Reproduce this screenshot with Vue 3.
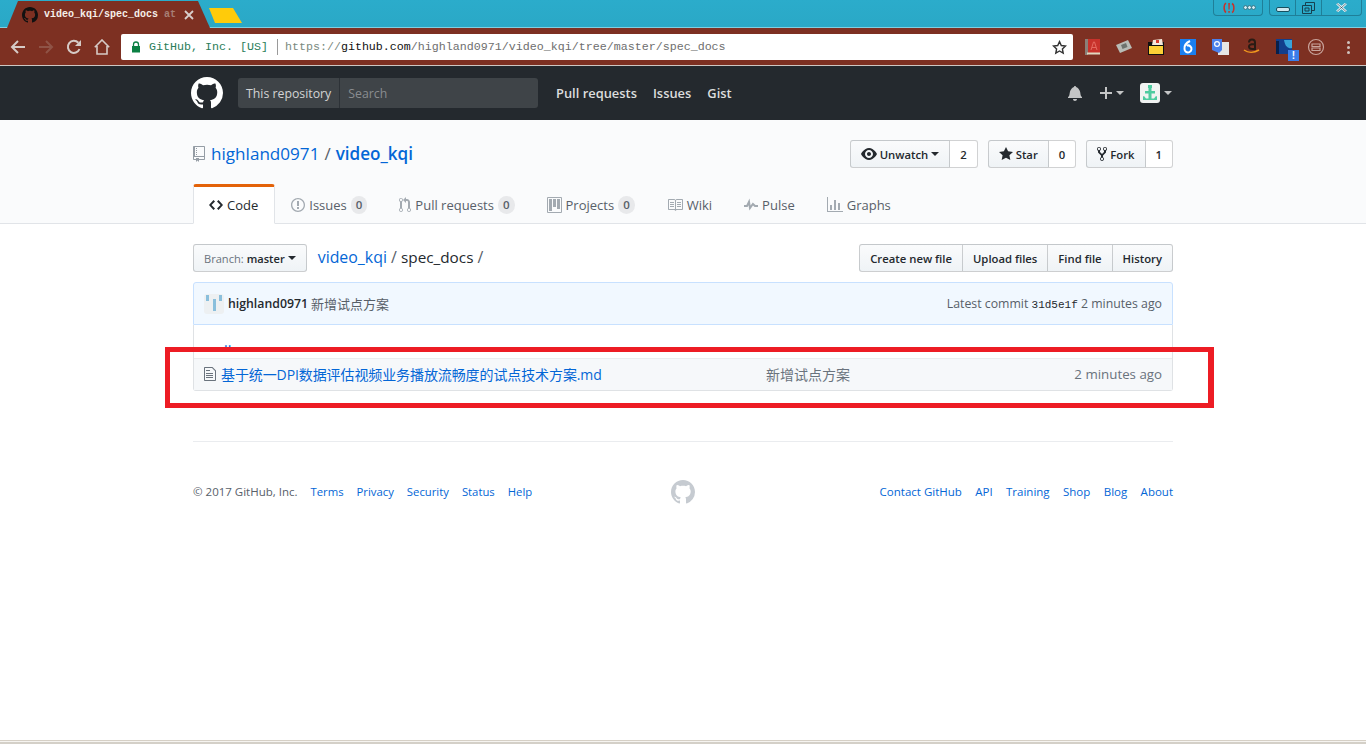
<script setup>
const gh = 'M8 0C3.58 0 0 3.58 0 8c0 3.54 2.29 6.53 5.47 7.59.4.07.55-.17.55-.38 0-.19-.01-.82-.01-1.49-2.01.37-2.53-.49-2.69-.94-.09-.23-.48-.94-.82-1.13-.28-.15-.68-.52-.01-.53.63-.01 1.08.58 1.23.82.72 1.21 1.87.87 2.33.66.07-.52.28-.87.51-1.07-1.78-.2-3.64-.89-3.64-3.95 0-.87.31-1.59.82-2.15-.08-.2-.36-1.02.08-2.12 0 0 .67-.21 2.2.82.64-.18 1.32-.27 2-.27.68 0 1.36.09 2 .27 1.53-1.04 2.2-.82 2.2-.82.44 1.1.16 1.92.08 2.12.51.56.82 1.27.82 2.15 0 3.07-1.87 3.75-3.65 3.95.29.25.54.73.54 1.48 0 1.07-.01 1.93-.01 2.2 0 .21.15.46.55.38A8.013 8.013 0 0 0 16 8c0-4.42-3.58-8-8-8z'

const tabs = [
  { label: 'Code', w: 14, vb: '0 0 14 16', d: 'M9.5 3L8 4.5 11.5 8 8 11.5 9.5 13 14 8 9.5 3zm-5 0L0 8l4.5 5L6 11.5 2.5 8 6 4.5 4.5 3z', active: true },
  { label: 'Issues', count: 0, w: 14, vb: '0 0 14 16', d: 'M7 2.3c3.14 0 5.7 2.56 5.7 5.7s-2.56 5.7-5.7 5.7A5.71 5.71 0 0 1 1.3 8c0-3.14 2.56-5.7 5.7-5.7zM7 1C3.14 1 0 4.14 0 8s3.14 7 7 7 7-3.14 7-7-3.14-7-7-7zm1 3H6v5h2V4zm0 6H6v2h2v-2z' },
  { label: 'Pull requests', count: 0, w: 12, vb: '0 0 12 16', d: 'M11 11.28V5c-.03-.78-.34-1.47-.94-2.06C9.46 2.35 8.78 2.03 8 2H7V0L4 3l3 3V4h1c.27.02.48.11.69.31.21.2.3.42.31.69v6.28A1.993 1.993 0 0 0 10 15a1.993 1.993 0 0 0 1-3.72zm-1 2.92c-.66 0-1.2-.55-1.2-1.2 0-.65.55-1.2 1.2-1.2.65 0 1.2.55 1.2 1.2 0 .65-.55 1.2-1.2 1.2zM4 3c0-1.11-.89-2-2-2a1.993 1.993 0 0 0-1 3.72v6.56A1.993 1.993 0 0 0 2 15a1.993 1.993 0 0 0 1-3.72V4.72c.59-.34 1-.98 1-1.72zm-.8 10c0 .66-.55 1.2-1.2 1.2-.65 0-1.2-.55-1.2-1.2 0-.65.55-1.2 1.2-1.2.65 0 1.2.55 1.2 1.2zM2 4.2C1.34 4.2.8 3.65.8 3c0-.65.55-1.2 1.2-1.2.65 0 1.2.55 1.2 1.2 0 .65-.55 1.2-1.2 1.2z' },
  { label: 'Projects', count: 0, w: 15, vb: '0 0 15 16', d: 'M10 12h3V2h-3v10zm-4-2h3V2H6v8zm-4 4h3V2H2v12zm-1 1h13V1H1v14zM14 0H1a1 1 0 0 0-1 1v14a1 1 0 0 0 1 1h13a1 1 0 0 0 1-1V1a1 1 0 0 0-1-1z' },
  { label: 'Wiki', w: 16, vb: '0 0 16 16', d: 'M3 5h4v1H3V5zm0 3h4V7H3v1zm0 2h4V9H3v1zm11-5h-4v1h4V5zm0 2h-4v1h4V7zm0 2h-4v1h4V9zm2-6v9c0 .55-.45 1-1 1H9.5l-1 1-1-1H2c-.55 0-1-.45-1-1V3c0-.55.45-1 1-1h5.5l1 1 1-1H15c.55 0 1 .45 1 1zm-8 .5L7.5 3H2v9h6V3.5zm7-.5H9.5l-.5.5V12h6V3z' },
  { label: 'Pulse', w: 14, vb: '0 0 14 16', d: 'M11.5 8L8.8 5.4 6.6 8.5 5.5 1.6 2.38 8H0v2h3.6l.9-1.8.9 5.4L9 8.5l1.6 1.5H14V8z' },
  { label: 'Graphs', w: 16, vb: '0 0 16 16', d: 'M16 14v1H0V0h1v14h15zM5 13H3V8h2v5zm4 0H7V3h2v10zm4 0h-2V6h2v7z' }
]

const footLeft = ['Terms', 'Privacy', 'Security', 'Status', 'Help']
const footRight = ['Contact GitHub', 'API', 'Training', 'Shop', 'Blog', 'About']
const fileActions = ['Create new file', 'Upload files', 'Find file', 'History']
</script>

<template>
  <div class="page">
    <!-- browser chrome -->
    <div class="tabstrip">
      <div class="tab">
        <svg class="tab-icon" width="16" height="16" viewBox="0 0 16 16"><path :d="gh" fill="#111" /></svg>
        <span class="tab-title">video_kqi/spec_docs <i>at</i></span>
        <svg class="tab-x" width="10" height="10" viewBox="0 0 10 10"><path d="M1 1l8 8M9 1l-8 8" stroke="#d8cfcc" stroke-width="1.8" /></svg>
      </div>
      <div class="tab-new"></div>
      <div class="winbtns">
        <div class="winbox alert">
          <svg width="14" height="12" viewBox="0 0 14 12"><path d="M4 1.200C1.500 2.500 1.500 9 4 10.500M10 1.500c2.500 1.200 2.500 7.800 0 9" fill="none" stroke="#c8322b" stroke-width="1.500" /><path d="M6.300 1h1.600l-.3 6.500H6.500zM6.300 9h1.500v1.700H6.300z" fill="#c8322b" /></svg>
          <span class="dots"><i></i><i></i><i></i></span>
        </div>
        <div class="winbox ctl">
          <div class="ctl-cell"><span class="min"></span></div>
          <div class="ctl-cell">
            <svg width="13" height="12" viewBox="0 0 13 12"><path d="M3.500 3V.5h9v8H10M.5 3.500h9v8h-9zM3 6h4v3H3z" fill="none" stroke="#16404f" /></svg>
          </div>
          <div class="ctl-cell wide">
            <svg width="11" height="9" viewBox="0 0 11 9"><path d="M1 .5l9 8M10 .5l-9 8" stroke="#e8f4f8" stroke-width="2.400" /><path d="M1 .5l9 8M10 .5l-9 8" stroke="#16404f" stroke-width=".6" /></svg>
          </div>
        </div>
      </div>
    </div>

    <div class="toolbar">
      <svg class="nav-ic" width="16" height="16" viewBox="0 0 16 16"><path d="M15 8H2M8 2L2 8l6 6" fill="none" stroke="#d6cac6" stroke-width="2" /></svg>
      <svg class="nav-ic" width="16" height="16" viewBox="0 0 16 16"><path d="M1 8h13M8 2l6 6-6 6" fill="none" stroke="#8f5346" stroke-width="2" /></svg>
      <svg class="nav-ic" width="16" height="16" viewBox="0 0 16 16"><path d="M13.500 10A6 6 0 1 1 12.300 3.800" fill="none" stroke="#d6cac6" stroke-width="2" /><path d="M15 1v6H9z" fill="#d6cac6" /></svg>
      <svg class="nav-ic" width="16" height="16" viewBox="0 0 16 16"><path d="M.8 8.200L8 1l7.200 7.200M3 7v8h10V7" fill="none" stroke="#d6cac6" stroke-width="1.600" /></svg>
      <div class="omni">
        <svg width="10" height="12" viewBox="0 0 10 12"><path d="M2.500 5V3.500a2.500 2.500 0 0 1 5 0V5" fill="none" stroke="#0b8043" stroke-width="1.300" /><rect x="1" y="5" width="8" height="6.500" fill="#0b8043" /></svg>
        <span class="omni-org">GitHub, Inc. [US]</span>
        <span class="omni-sep"></span>
        <span class="omni-url"><span class="scheme">https://</span><b>github.com</b>/highland0971/video_kqi/tree/master/spec_docs</span>
        <svg class="omni-star" width="15" height="15" viewBox="0 0 15 15"><path d="M7.500 1.600l1.800 3.900 4.200.5-3.100 2.900.8 4.200-3.700-2.100-3.700 2.100.8-4.200L1.500 6l4.200-.5z" fill="none" stroke="#333" stroke-width="1.400" /></svg>
      </div>
      <div class="exts">
        <svg width="18" height="18" viewBox="0 0 18 18"><rect x="4" y="1" width="13" height="15" fill="#c8322b" /><rect x="2" y="1" width="3" height="16" fill="#8a8078" /><rect x="4" y="14.500" width="13" height="2" fill="#e0d8c0" /><path d="M8 12l2.500-8h1L14 12M9 9.500h4" fill="none" stroke="#e56a60" /></svg>
        <svg width="18" height="18" viewBox="0 0 18 18"><path d="M1 7l12-5 4 8-12 5z" fill="#b8bcb6" /><path d="M6 7l5-2 1.500 4-5 2z" fill="#6d736e" /></svg>
        <svg width="18" height="18" viewBox="0 0 18 18"><rect x="1" y="4" width="16" height="13" fill="#111" /><path d="M2 8h14v8H2z" fill="#fcd036" /><path d="M6 2l9-1 1 6H5z" fill="#f4e8dc" /><rect x="9" y="2" width="3" height="3" fill="#d63b2f" /></svg>
        <svg width="18" height="18" viewBox="0 0 18 18"><rect width="16" height="16" x="1" y="1" fill="#1a7ff0" /><path d="M11 3C7 5 5 8 5.500 11a3.500 3.500 0 1 0 6-2.500C10 7 9 7 8 8" fill="none" stroke="#fff" stroke-width="2" /></svg>
        <svg width="18" height="18" viewBox="0 0 18 18"><rect x="7" y="4" width="11" height="13" fill="#e6e6e6" /><path d="M1 1h10v11l-3 3-7-3z" fill="#4a80ec" /><circle cx="6" cy="6" r="2.400" fill="none" stroke="#fff" stroke-width="1.200" /></svg>
        <svg width="18" height="18" viewBox="0 0 18 18"><path d="M6 4.500a3 3 0 0 1 6 0V11H9.500C7.500 11 6 10 6 8.500S7.500 6 11 6" fill="none" stroke="#2a1b14" stroke-width="2" /><path d="M1 12c4 3 10 3 15 0" fill="none" stroke="#f39a1e" stroke-width="1.500" /></svg>
        <span class="ext-badge-wrap">
          <svg width="18" height="18" viewBox="0 0 18 18"><rect x="1" y="1" width="16" height="15" fill="#123e8c" /><path d="M9 2h8v8c-3 1-7-1-8-8z" fill="#38a3d8" /><rect x="1" y="3" width="3" height="13" fill="#07204c" /></svg>
          <span class="ext-badge">!</span>
        </span>
        <svg width="18" height="18" viewBox="0 0 18 18"><circle cx="9" cy="9" r="7.500" fill="none" stroke="#c9a49c" stroke-width="1.200" /><path d="M5 6h8v2.500H5zM5 10h8v2.500H5z" fill="none" stroke="#c9a49c" stroke-width="1.200" /></svg>
        <span class="kebab"><i></i><i></i><i></i></span>
      </div>
    </div>

    <!-- github header -->
    <header class="gh-header">
      <div class="gh-inner">
        <svg class="gh-logo" width="32" height="32" viewBox="0 0 16 16"><path :d="gh" fill="#fff" /></svg>
        <div class="search">
          <span class="search-scope">This repository</span>
          <span class="search-input">Search</span>
        </div>
        <nav class="gh-nav">
          <span>Pull requests</span>
          <span>Issues</span>
          <span>Gist</span>
        </nav>
        <div class="gh-right">
          <svg class="bell" width="14" height="16" viewBox="0 0 14 16"><path d="M14 12v1H0v-1l.73-.58c.77-.77.81-2.55 1.19-4.42C2.69 3.23 6 2 6 2c0-.55.45-1 1-1s1 .45 1 1c0 0 3.39 1.23 4.16 5 .38 1.88.42 3.66 1.19 4.42l.66.58H14zm-7 4c1.11 0 2-.89 2-2H5c0 1.11.89 2 2 2z" fill="#c4c5c6" /></svg>
          <span class="plus-wrap">
            <svg width="12" height="12" viewBox="0 0 12 12"><path d="M5 0h2v5h5v2H7v5H5V7H0V5h5z" fill="#c4c5c6" /></svg>
            <span class="caret light"></span>
          </span>
          <span class="avatar-wrap">
            <span class="avatar">
              <svg width="16" height="16" viewBox="0 0 16 16"><path d="M6 0h4v3H9.500v3H13v2.500H9.500v5H12l2-2.500 1 .5V15H1v-3.500l1-.5 2 2.500h2.500v-5H3V6h3.500V3H6z" fill="#4fcba0" /></svg>
            </span>
            <span class="caret light"></span>
          </span>
        </div>
      </div>
    </header>

    <!-- repo head -->
    <section class="repohead">
      <div class="container">
        <div class="repo-top">
          <h1 class="repo-title">
            <svg class="repo-ic" width="12" height="16" viewBox="0 0 12 16"><path d="M4 9H3V8h1v1zm0-3H3v1h1V6zm0-2H3v1h1V4zm0-2H3v1h1V2zm8-1v12c0 .55-.45 1-1 1H6v2l-1.500-1.500L3 16v-2H1c-.55 0-1-.45-1-1V1c0-.55.45-1 1-1h10c.55 0 1 .45 1 1zm-1 10H1v2h2v-1h3v1h5v-2zm0-10H2v9h9V1z" fill="#959da5" /></svg>
            <a>highland0971</a><span class="slash">/</span><a class="strong">video_kqi</a>
          </h1>
          <div class="pagehead-actions">
            <div class="btn-count">
              <span class="btn">
                <svg width="16" height="16" viewBox="0 0 16 16"><path d="M8.060 2C3 2 0 8 0 8s3 6 8.060 6C13 14 16 8 16 8s-3-6-7.940-6zM8 12c-2.200 0-4-1.780-4-4 0-2.200 1.800-4 4-4 2.220 0 4 1.800 4 4 0 2.220-1.780 4-4 4zm2-4c0 1.110-.89 2-2 2-1.110 0-2-.89-2-2 0-1.110.89-2 2-2 1.110 0 2 .89 2 2z" fill="#24292e" /></svg>
                Unwatch<span class="caret tight"></span>
              </span>
              <span class="count">2</span>
            </div>
            <div class="btn-count">
              <span class="btn">
                <svg width="14" height="16" viewBox="0 0 14 16"><path d="M14 6l-4.900-.64L7 1 4.900 5.360 0 6l3.600 3.260L2.670 14 7 11.670 11.330 14l-.93-4.740L14 6z" fill="#24292e" /></svg>
                Star
              </span>
              <span class="count">0</span>
            </div>
            <div class="btn-count">
              <span class="btn">
                <svg width="10" height="16" viewBox="0 0 10 16"><path d="M8 1a1.993 1.993 0 0 0-1 3.720V6L5 8 3 6V4.720A1.993 1.993 0 0 0 2 1a1.993 1.993 0 0 0-1 3.720V6.500l3 3v1.780A1.993 1.993 0 0 0 5 15a1.993 1.993 0 0 0 1-3.720V9.500l3-3V4.720A1.993 1.993 0 0 0 8 1zM2 4.200C1.340 4.200.8 3.650.8 3c0-.65.55-1.200 1.200-1.200.65 0 1.200.55 1.200 1.200 0 .65-.55 1.200-1.200 1.200zm3 10c-.66 0-1.200-.55-1.200-1.200 0-.65.55-1.200 1.200-1.200.65 0 1.200.55 1.200 1.200 0 .65-.55 1.200-1.200 1.200zm3-10c-.66 0-1.200-.55-1.200-1.200 0-.65.55-1.200 1.200-1.200.65 0 1.200.55 1.200 1.200 0 .65-.55 1.200-1.200 1.200z" fill="#24292e" /></svg>
                Fork
              </span>
              <span class="count">1</span>
            </div>
          </div>
        </div>
        <nav class="reponav">
          <span v-for="t in tabs" :key="t.label" class="reponav-item" :class="{ selected: t.active }">
            <svg :width="t.w" height="16" :viewBox="t.vb"><path :d="t.d" fill-rule="evenodd" /></svg>
            {{ t.label }}
            <span v-if="t.count !== undefined" class="counter">{{ t.count }}</span>
          </span>
        </nav>
      </div>
    </section>

    <!-- file listing -->
    <main class="container main">
      <div class="file-nav">
        <span class="branch-btn"><span class="branch-label">Branch:</span> master<span class="caret tight"></span></span>
        <div class="breadcrumb"><a>video_kqi</a> / <b>spec_docs</b> /</div>
        <div class="file-actions">
          <span v-for="a in fileActions" :key="a">{{ a }}</span>
        </div>
      </div>

      <div class="commit-tease">
        <span class="commit-avatar"><i></i><i></i><i></i></span>
        <b class="commit-author">highland0971</b>
        <span class="commit-msg">新增试点方案</span>
        <span class="commit-meta">Latest commit <code>31d5e1f</code> 2 minutes ago</span>
      </div>
      <div class="files">
        <div class="row up"><a>..</a></div>
        <div class="row file">
          <svg width="12" height="16" viewBox="0 0 12 16"><path d="M6 5H2V4h4v1zM2 8h7V7H2v1zm0 2h7V9H2v1zm0 2h7v-1H2v1zm10-7.500V14c0 .55-.45 1-1 1H1c-.55 0-1-.45-1-1V2c0-.55.45-1 1-1h7.500L12 4.500zM11 5L8 2H1v12h10V5z" fill="#6a737d" /></svg>
          <a class="file-name">基于统一DPI数据评估视频业务播放流畅度的试点技术方案.md</a>
          <span class="file-msg">新增试点方案</span>
          <span class="file-age">2 minutes ago</span>
        </div>
      </div>
    </main>

    <!-- footer -->
    <footer class="container footer">
      <div class="foot-left">
        <span class="copy">© 2017 GitHub, Inc.</span>
        <a v-for="l in footLeft" :key="l">{{ l }}</a>
      </div>
      <svg class="foot-mark" width="24" height="24" viewBox="0 0 16 16"><path :d="gh" fill="#c6cbd1" /></svg>
      <div class="foot-right">
        <a v-for="l in footRight" :key="l">{{ l }}</a>
      </div>
    </footer>

    <div class="spacer"></div>
    <div class="bottom-edge"></div>

    <!-- annotation drawn over the screenshot -->
    <div class="annotation"></div>
  </div>
</template>

<style>
html, body {
  margin: 0;
  overflow: hidden;
  background: #fff;
}
</style>

<style scoped>
.page {
  position: relative;
  height: 744px;
  display: flex;
  flex-direction: column;
  font-family: "Open Sans", "Noto Sans CJK SC", sans-serif;
  font-size: 13px;
  color: #24292e;
  overflow: hidden;
}

/* browser chrome */
.tabstrip {
  height: 28px;
  flex: none;
  display: flex;
  background: linear-gradient(#2baccb, #2aa8c6);
  box-shadow: inset 0 -1px 0 #7fd0e2;
}
.tab {
  width: 203px;
  margin-left: 7px;
  margin-top: 1px;
  height: 27px;
  background: #7d3022;
  clip-path: polygon(11px 0, 191px 0, 203px 100%, 0 100%);
  display: flex;
  align-items: center;
  padding-left: 15px;
  box-sizing: border-box;
  margin-right: -1px;
  flex: none;
}
.tab-title {
  margin-left: 6px;
  width: 132px;
  flex: none;
  white-space: nowrap;
  font: bold 10px "Liberation Mono", monospace;
  color: #f6efe9;
}
.tab-title i {
  font-style: normal;
  color: #a77f75;
}
.tab-x {
  margin-left: 8px;
}
.tab-new {
  width: 33px;
  height: 15px;
  margin-top: 8px;
  background: #ffcb0a;
  clip-path: polygon(0 0, 24px 0, 33px 100%, 6px 100%);
}
.winbtns {
  margin-left: auto;
  display: flex;
  gap: 6px;
  padding-right: 4px;
}
.winbox {
  height: 16px;
  border: 1px solid #1f7f98;
  border-top: 0;
  border-radius: 0 0 4px 4px;
  display: flex;
  align-items: center;
}
.alert {
  width: 50px;
  box-sizing: border-box;
  justify-content: center;
  gap: 8px;
}
.dots {
  display: flex;
  gap: 1px;
}
.dots i {
  width: 3px;
  height: 3px;
  background: #dcecf1;
  border-radius: 50%;
  outline: 1px solid #48808f;
}
.ctl {
  width: 93px;
  box-sizing: border-box;
}
.ctl-cell {
  width: 25px;
  height: 100%;
  display: flex;
  align-items: center;
  justify-content: center;
  border-right: 1px solid #1f7f98;
}
.ctl-cell.wide {
  flex: 1;
  border-right: 0;
}
.min {
  width: 12px;
  height: 3px;
  background: #cfe9f0;
  border: 1px solid #16505f;
  border-radius: 2px;
  margin-top: 4px;
}

.toolbar {
  height: 38px;
  flex: none;
  background: #7d3022;
  box-shadow: inset 0 -1px 0 #cdc6c3;
  display: flex;
  align-items: center;
  padding-left: 10px;
  box-sizing: border-box;
}
.nav-ic {
  margin-right: 12px;
}
.omni {
  margin-left: -1px;
  width: 952px;
  height: 26px;
  flex: none;
  background: #fff;
  border-radius: 2px;
  display: flex;
  align-items: center;
  padding-left: 10px;
  box-sizing: border-box;
  font: 11.67px "Liberation Mono", monospace;
  white-space: nowrap;
}
.omni-org {
  margin-left: 8px;
  color: #2a7d59;
}
.omni-sep {
  width: 1px;
  height: 16px;
  background: #9a9a9a;
  margin: 0 7px 0 9px;
}
.omni-url {
  color: #6e6e6e;
}
.omni-url .scheme {
  color: #7a8a80;
}
.omni-url b {
  font-weight: normal;
  color: #111;
}
.omni-star {
  margin-left: auto;
  margin-right: 6px;
}
.exts {
  display: flex;
  align-items: center;
  gap: 14px;
  padding-left: 10px;
}
.ext-badge-wrap {
  position: relative;
  display: flex;
}
.ext-badge {
  position: absolute;
  right: -6px;
  bottom: -5px;
  width: 11px;
  height: 11px;
  background: #3b7de9;
  color: #fff;
  font: bold 10px/11px "Liberation Sans", sans-serif;
  text-align: center;
}
.kebab {
  display: flex;
  flex-direction: column;
  gap: 2px;
  margin-left: 8px;
}
.kebab i {
  width: 3px;
  height: 3px;
  background: #cfc2be;
  border-radius: 50%;
}

/* github header */
.gh-header {
  height: 54px;
  flex: none;
  background: #24292e;
}
.gh-inner {
  width: 984px;
  margin: 0 auto;
  height: 100%;
  display: flex;
  align-items: center;
}
.gh-logo {
  flex: none;
}
.search {
  margin-left: 15px;
  width: 300px;
  height: 30px;
  display: flex;
  background: #3f4448;
  border-radius: 3px;
  font-size: 12.3px;
  line-height: 31px;
  overflow: hidden;
}
.search-scope {
  padding: 0 8px;
  color: #d3d4d5;
  border-right: 1px solid #2d3237;
}
.search-input {
  padding-left: 8px;
  color: #8a8d90;
}
.gh-nav {
  display: flex;
  gap: 16px;
  margin-left: 18px;
  color: #dcdddd;
  font-weight: 600;
  font-size: 12.9px;
}
.gh-right {
  margin-left: auto;
  display: flex;
  align-items: center;
  margin-right: 3px;
}
.bell {
  margin-right: 18px;
}
.plus-wrap, .avatar-wrap {
  display: flex;
  align-items: center;
}
.avatar-wrap {
  margin-left: 16px;
}
.avatar {
  width: 20px;
  height: 20px;
  border-radius: 3px;
  background: #f1f3f2;
  display: flex;
  align-items: center;
  justify-content: center;
}
.caret {
  display: inline-block;
  width: 0;
  height: 0;
  margin-left: 4px;
  border: 4px solid transparent;
  border-top-color: #24292e;
  border-bottom: 0;
}
.caret.tight {
  margin-left: 0;
}
.caret.light {
  border-top-color: #c4c5c6;
}

/* repo head */
.container {
  width: 980px;
  margin: 0 auto;
}
.repohead {
  height: 104px;
  flex: none;
  background: #fafbfc;
  border-bottom: 1px solid #e1e4e8;
  box-sizing: border-box;
}
.repo-top {
  height: 64px;
  display: flex;
  align-items: flex-start;
  justify-content: space-between;
  padding-top: 20px;
  box-sizing: border-box;
}
.repo-title {
  margin: 0;
  font-size: 17.1px;
  font-weight: 400;
  line-height: 28px;
  display: flex;
  align-items: center;
}
.repo-title a {
  color: #0366d6;
}
.repo-title .strong {
  font-weight: 600;
}
.slash {
  margin: 0 5px;
  color: #586069;
}
.repo-ic {
  margin-right: 6px;
}
.pagehead-actions {
  display: flex;
  gap: 10px;
}
.btn-count {
  display: flex;
  height: 28px;
  font-size: 11.3px;
  font-weight: 600;
}
.btn {
  display: flex;
  align-items: center;
  gap: 3px;
  padding: 0 10px;
  border: 1px solid rgba(27, 31, 35, 0.2);
  border-radius: 3px 0 0 3px;
  background: linear-gradient(#fafbfc, #eff3f6);
  box-sizing: border-box;
}
.count {
  display: flex;
  align-items: center;
  padding: 0 10px;
  border: 1px solid rgba(27, 31, 35, 0.2);
  border-left: 0;
  border-radius: 0 3px 3px 0;
  background: #fff;
  box-sizing: border-box;
}
.reponav {
  display: flex;
  height: 40px;
}
.reponav-item {
  display: flex;
  align-items: center;
  gap: 4px;
  padding: 0 15px;
  color: #586069;
  box-sizing: border-box;
  height: 40px;
  border: 1px solid transparent;
  border-top-width: 3px;
}
.reponav-item svg {
  fill: #a3aab1;
}
.reponav-item.selected {
  color: #24292e;
  background: #fff;
  border-color: #e36209 #e1e4e8 #fff;
  border-radius: 3px 3px 0 0;
  padding-right: 16px;
}
.reponav-item.selected svg {
  fill: #24292e;
}
.counter {
  padding: 3px 5px;
  font-size: 11.5px;
  font-weight: 600;
  line-height: 12px;
  background: rgba(27, 31, 35, 0.08);
  border-radius: 20px;
  color: #586069;
}

/* file listing */
.main {
  flex: none;
  padding-top: 20px;
}
.file-nav {
  display: flex;
  align-items: center;
  height: 28px;
  margin-bottom: 10px;
}
.branch-btn {
  height: 28px;
  padding: 0 10px;
  display: flex;
  align-items: center;
  gap: 3px;
  font-size: 11.1px;
  font-weight: 600;
  border: 1px solid rgba(27, 31, 35, 0.2);
  border-radius: 3px;
  background: linear-gradient(#fafbfc, #eff3f6);
  box-sizing: border-box;
}
.branch-label {
  color: #6a737d;
  font-weight: 400;
}
.breadcrumb {
  margin-left: 11px;
  padding-bottom: 2px;
  font-size: 15.9px;
  color: #586069;
}
.breadcrumb a {
  color: #0366d6;
}
.breadcrumb b {
  color: #24292e;
  font-size: 15.3px;
  font-weight: 400;
}
.file-actions {
  margin-left: auto;
  display: flex;
  font-size: 11.3px;
  font-weight: 600;
}
.file-actions span {
  height: 28px;
  line-height: 27px;
  padding: 0 10px;
  border: 1px solid rgba(27, 31, 35, 0.2);
  margin-left: -1px;
  background: linear-gradient(#fafbfc, #eff3f6);
  box-sizing: border-box;
}
.file-actions span:first-child {
  border-radius: 3px 0 0 3px;
}
.file-actions span:last-child {
  border-radius: 0 3px 3px 0;
}
.commit-tease {
  height: 43px;
  display: flex;
  align-items: center;
  padding: 0 10px;
  background: #f1f8ff;
  border: 1px solid #c8e1ff;
  border-radius: 3px 3px 0 0;
  font-size: 12.3px;
  box-sizing: border-box;
}
.commit-avatar {
  width: 20px;
  height: 20px;
  background: #edf0f2;
  border-radius: 3px;
  margin-right: 4px;
  display: flex;
  justify-content: space-between;
  padding: 1px 2px;
  box-sizing: border-box;
}
.commit-avatar i {
  width: 3px;
  height: 6px;
  background: #8abfdc;
}
.commit-avatar i:nth-child(2) {
  height: 12px;
  margin-top: 4px;
}
.commit-author {
  font-weight: 600;
}
.commit-msg {
  margin-left: 3px;
  font-size: 13px;
  color: #586069;
}
.commit-meta {
  margin-left: auto;
  color: #586069;
}
.commit-meta code {
  font: 11px "Liberation Mono", monospace;
  color: #24292e;
}
.files {
  border: 1px solid #dfe2e5;
  border-top: 0;
  border-radius: 0 0 3px 3px;
}
.row {
  height: 33px;
  box-sizing: border-box;
  display: flex;
  align-items: center;
  padding: 0 10px;
  font-size: 14px;
}
.up a {
  color: #0366d6;
  margin-left: 20px;
}
.file {
  height: 32px;
  padding-bottom: 1px;
  background: #f6f8fa;
  border-top: 1px solid #eaecef;
}
.file-name {
  margin-left: 5px;
  width: 545px;
  color: #0366d6;
  letter-spacing: -0.1px;
  white-space: nowrap;
}
.file-msg {
  color: #6a737d;
}
.file-age {
  margin-left: auto;
  font-size: 13.3px;
  color: #6a737d;
}

/* footer */
.footer {
  flex: none;
  margin-top: 50px;
  padding-top: 38px;
  border-top: 1px solid #eaecef;
  display: flex;
  align-items: center;
  justify-content: space-between;
  font-size: 11.3px;
}
.foot-left, .foot-right {
  display: flex;
  width: 420px;
  padding-bottom: 2px;
}
.foot-left {
  gap: 13px;
}
.foot-right {
  gap: 13.4px;
  font-size: 11.5px;
  justify-content: flex-end;
}
.footer a {
  color: #0366d6;
}
.copy {
  font-size: 11.5px;
  color: #586069;
}
.foot-mark {
  flex: none;
}

.spacer {
  flex: 1;
}
.bottom-edge {
  height: 4px;
  flex: none;
  background: #f6f4f0;
  border-top: 1px solid #d6d0c6;
  border-bottom: 2px solid #d4d0c8;
  box-sizing: border-box;
}

.annotation {
  position: absolute;
  left: 165px;
  top: 347px;
  width: 1049px;
  height: 61px;
  border: 5px solid #ed1c24;
  border-right-width: 6px;
  box-sizing: border-box;
}
</style>
